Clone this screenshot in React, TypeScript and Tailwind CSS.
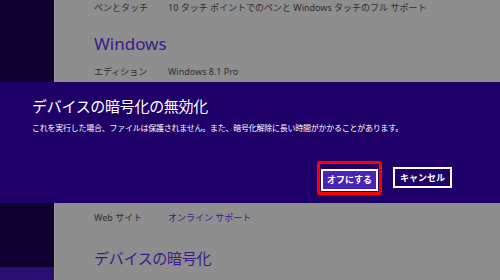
import React from 'react';

const font = "font-['Noto_Sans','Noto_Sans_CJK_JP',sans-serif]";

const Row = ({ label, value, link }: { label: string; value: string; link?: boolean }) => (
  <div className="flex items-center h-[16px] text-[9px]">
    <span className="w-[74px] text-[#2f2f2f]">{label}</span>
    <span className={link ? 'text-[#3a1a8c]' : 'text-[#2f2f2f]'}>{value}</span>
  </div>
);

const App = () => {
  return (
    <div className={`relative w-[500px] h-[280px] overflow-hidden bg-[#8e8e8e] ${font}`}>
      <div className="flex h-full">
        {/* left rail */}
        <div className="w-[54px] flex flex-col">
          <div className="flex-1 bg-[#0d0030]" />
          <div className="h-[13px] bg-[#2a0f72]" />
        </div>

        {/* settings page, dimmed */}
        <div className="flex-1 border-l border-[#9b9b9b] pl-[39px] flex flex-col">
          <div className="mt-[0px]">
            <Row label="ペンとタッチ" value="10 タッチ ポイントでのペンと Windows タッチのフル サポート" />
          </div>
          <div className="mt-[16px] text-[17px] leading-[24px] text-[#3a1a8c]">Windows</div>
          <div className="mt-[8px]">
            <Row label="エディション" value="Windows 8.1 Pro" />
          </div>
          <div className="mt-[130px]">
            <Row label="Web サイト" value="オンライン サポート" link />
          </div>
          <div className="mt-[22px] text-[15px] leading-[20px] tracking-[-0.3px] text-[#3a1a8c]">デバイスの暗号化</div>
        </div>
      </div>

      {/* dialog band */}
      <div className="absolute left-0 right-0 top-[82px] h-[121px] bg-[#1e0068] px-[32px] pt-[14px] text-white">
        <div className="text-[15px] leading-[20px] tracking-[-0.3px]">デバイスの暗号化の無効化</div>
        <div className="mt-[5px] text-[8px] leading-[14px] tracking-[-0.25px]">
          これを実行した場合、ファイルは保護されません。また、暗号化解除に長い時間がかかることがあります。
        </div>
        <div className="absolute right-[48px] top-[79px] flex items-center gap-[11px]">
          <div className="rounded-[3px] border-[3px] border-[#ff0000] p-[1px]">
            <button className="w-[57px] h-[22px] border-2 border-white bg-[#4a24b4] text-[9px] font-bold text-white">
              オフにする
            </button>
          </div>
          <button className="w-[59px] h-[21px] border-2 border-white bg-[#1e0068] text-[9px] font-bold text-white">
            キャンセル
          </button>
        </div>
      </div>
    </div>
  );
};

export default App;
